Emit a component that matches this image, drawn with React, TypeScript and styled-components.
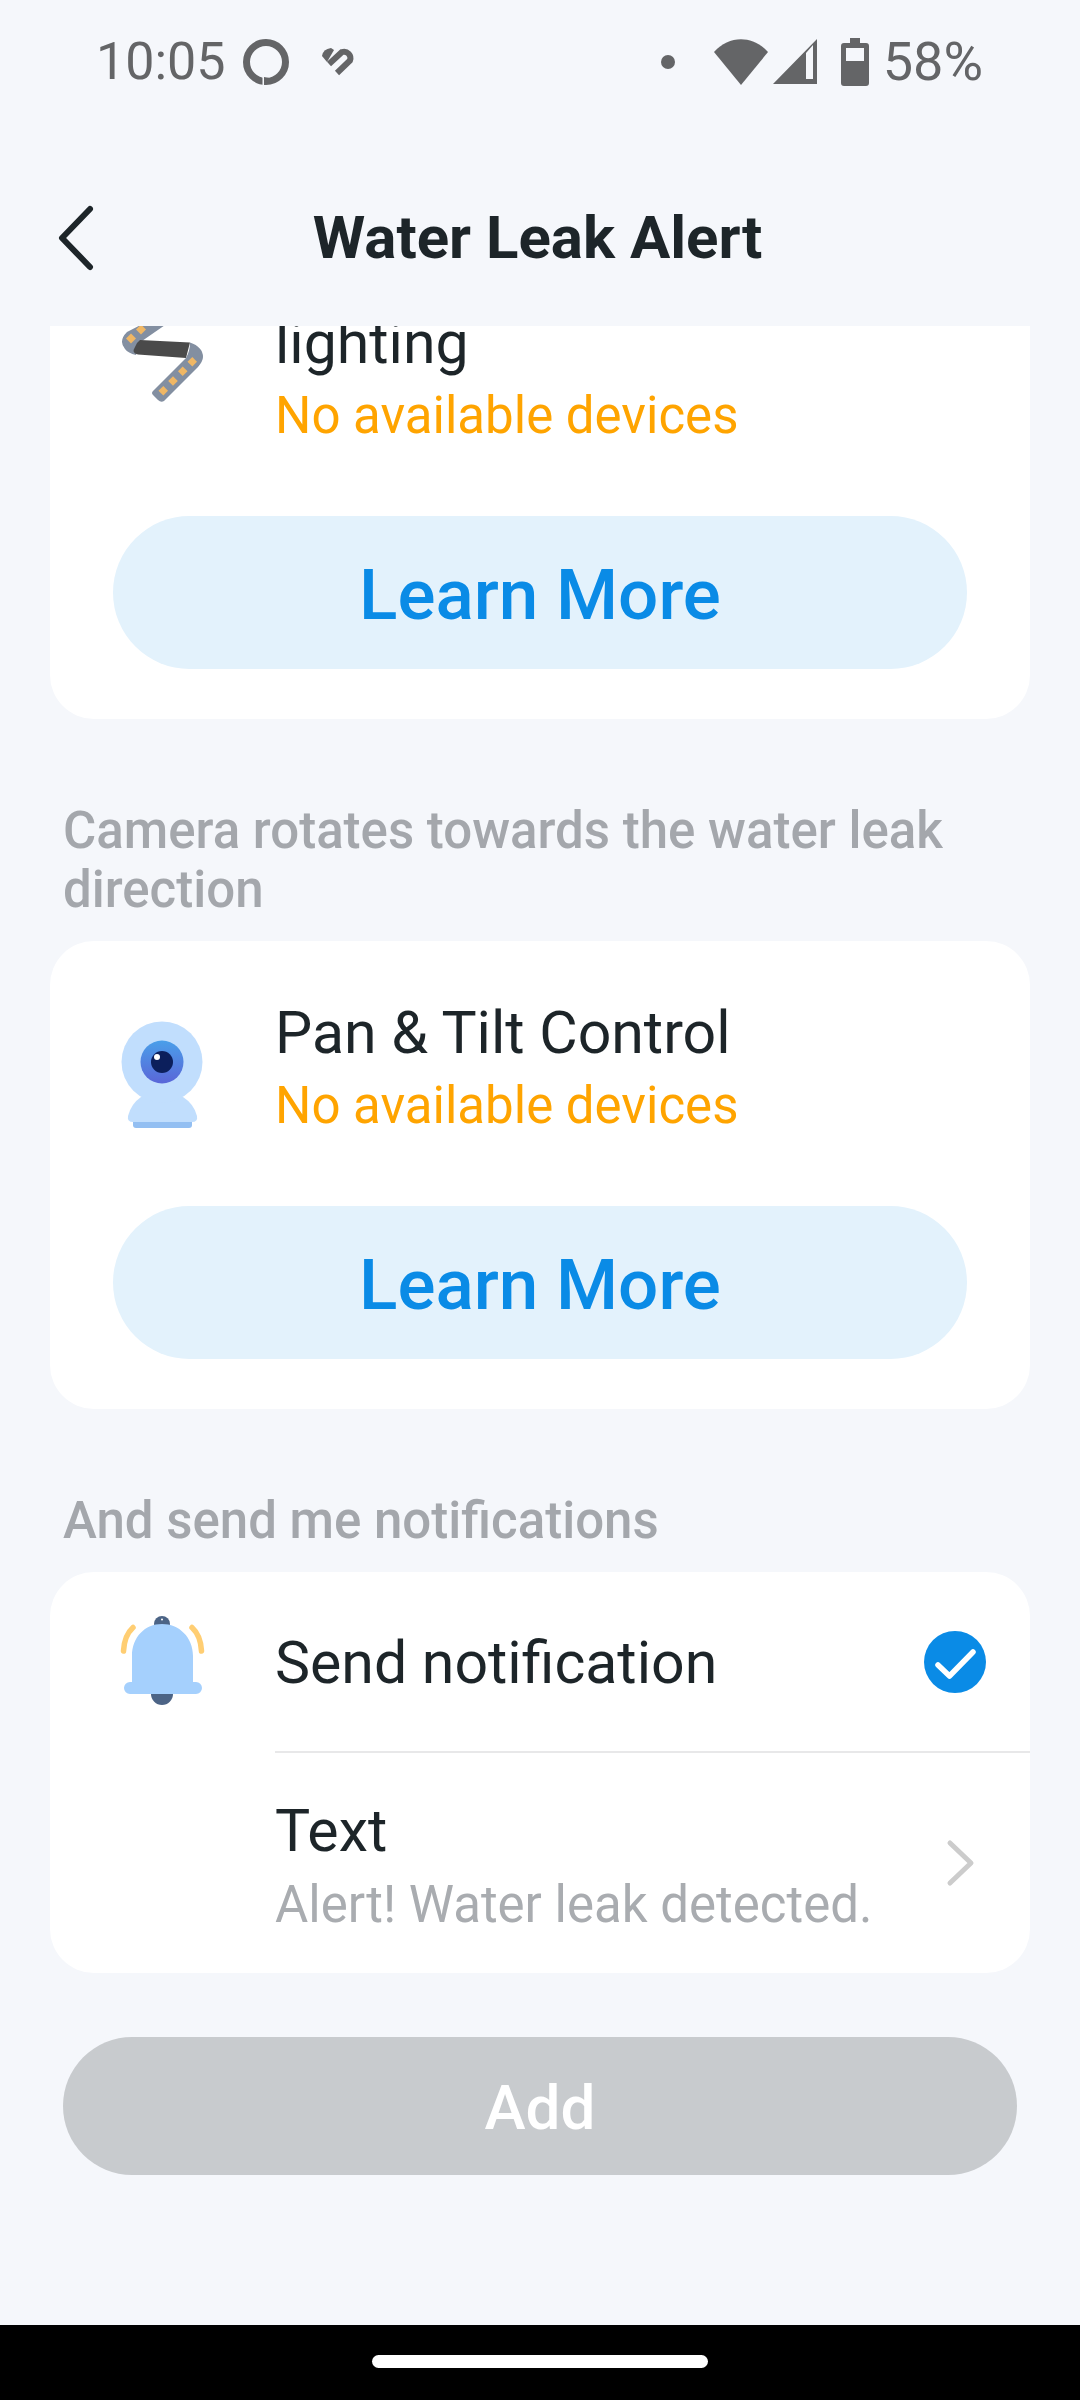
import React from 'react';
import styled, { createGlobalStyle } from 'styled-components';

const GlobalStyle = createGlobalStyle`
  html, body {
    margin: 0;
    padding: 0;
    background: #f5f7fb;
    font-family: Roboto, "Liberation Sans", sans-serif;
  }
`;

const Screen = styled.div`
  width: 1080px;
  height: 2400px;
  display: flex;
  flex-direction: column;
  background: #f5f7fb;
  overflow: hidden;
`;

// ---- status bar ----

const StatusBar = styled.div`
  height: 122px;
  flex: none;
  display: flex;
  justify-content: space-between;
  align-items: flex-start;
  padding: 37px 97px 0 96px;
  box-sizing: border-box;
  color: #646567;
`;

const StatusGroup = styled.div`
  display: flex;
  align-items: center;
  height: 50px;
`;

const StatusText = styled.span<{ $left?: number; $size?: number }>`
  font-size: ${(p) => p.$size ?? 52}px;
  line-height: 50px;
  margin-left: ${(p) => p.$left ?? 0}px;
`;

const StatusIcon = styled.svg<{ $left: number }>`
  display: block;
  flex: none;
  margin-left: ${(p) => p.$left}px;
  fill: #646567;
`;

// ---- header ----

const Header = styled.header`
  height: 204px;
  flex: none;
  position: relative;
  display: flex;
  justify-content: center;
  padding: 78px 5px 0 0;
  box-sizing: border-box;
`;

const Title = styled.h1`
  margin: 0;
  font-size: 60px;
  line-height: 76px;
  height: 76px;
  font-weight: 700;
  color: #1d2529;
`;

const BackIcon = styled.svg`
  position: absolute;
  left: 50px;
  top: 68px;
`;

// ---- scrolled content ----

const Scroller = styled.main`
  flex: 1;
  overflow: hidden;
  padding: 0 50px;
`;

const ScrollInner = styled.div`
  margin-top: -75px;
  display: flex;
  flex-direction: column;
`;

const SectionLabel = styled.div`
  margin: 82px 0 22px;
  padding-left: 13px;
  font-size: 51px;
  line-height: 59px;
  font-weight: 500;
  color: #a4a7ac;
`;

const Card = styled.section`
  background: #fff;
  border-radius: 44px;
  overflow: hidden;
`;

const DeviceCard = styled(Card)`
  padding: 59px 63px 50px;
`;

const DeviceRow = styled.div`
  display: flex;
  margin-left: -23px;
`;

const DeviceIcon = styled.svg`
  display: block;
  flex: none;
  width: 160px;
  height: 160px;
  margin: -9px 25px -60px 0;
`;

const DeviceText = styled.div`
  min-width: 0;
`;

const ItemTitle = styled.div`
  font-size: 59px;
  line-height: 66px;
  color: #1d2529;
`;

const Warning = styled.div`
  margin-top: 7px;
  font-size: 51px;
  line-height: 66px;
  color: #ffa400;
`;

const LearnMore = styled.button`
  display: block;
  width: 100%;
  height: 153px;
  margin-top: 67px;
  padding: 3px 0 0;
  border: 0;
  border-radius: 77px;
  background: #e3f2fc;
  color: #0a8be6;
  font-family: inherit;
  font-size: 71px;
  font-weight: 500;
`;

const NotifyRow = styled.div`
  height: 179px;
  display: flex;
  align-items: center;
  padding-left: 40px;
  padding-right: 44px;
`;

const BellIcon = styled.svg`
  display: block;
  flex: none;
  margin-right: 25px;
  margin-top: -11px;
`;

const Grow = styled.div`
  flex: 1;
  min-width: 0;
`;

const NotifyLabel = styled(Grow)`
  padding-top: 3px;
`;

const CheckIcon = styled.svg`
  display: block;
  flex: none;
`;

const Divider = styled.div`
  height: 2px;
  margin-left: 225px;
  background: #e8e8e9;
`;

const TextRow = styled.div`
  height: 220px;
  display: flex;
  align-items: flex-start;
  padding-left: 225px;
  padding-right: 54px;
  padding-top: 45px;
  box-sizing: border-box;
`;

const Hint = styled.div`
  margin-top: 8px;
  font-size: 51px;
  line-height: 66px;
  color: #a9acb0;
`;

const ChevronIcon = styled.svg`
  display: block;
  flex: none;
  margin-top: 41px;
`;

const AddButton = styled.button`
  display: block;
  width: 954px;
  height: 138px;
  margin: 64px 0 0 13px;
  padding: 3px 0 0;
  border: 0;
  border-radius: 69px;
  background: #c8cbce;
  color: #fff;
  font-family: inherit;
  font-size: 62px;
  font-weight: 500;
`;

// ---- navigation bar ----

const NavBar = styled.div`
  height: 75px;
  flex: none;
  background: #000;
  display: flex;
  justify-content: center;
  padding-top: 30px;
  box-sizing: border-box;
`;

const NavPill = styled.div`
  width: 336px;
  height: 13px;
  border-radius: 7px;
  background: #fff;
`;

// ---- drawings ----

const AlexaGlyph = () => (
  <StatusIcon $left={17} width="46" height="46" viewBox="0 0 46 46">
    <circle cx="23" cy="23" r="19.500" fill="none" stroke="#646567" strokeWidth="7" />
    <path d="M21 46 L21 38 L32 40 Z" />
    <rect x="19.500" y="38" width="1.500" height="8" fill="#f5f7fb" />
  </StatusIcon>
);

const HeartGlyph = () => (
  <StatusIcon $left={33} width="34" height="30" viewBox="0 0 34 30">
    <path d="M0 9 Q1 2 9 1 L12 3 L5 15 Z" />
    <path
      d="M7 17 L20 5 A6.500 6.500 0 0 1 28 13.500 L15 26"
      fill="none"
      stroke="#646567"
      strokeWidth="6"
    />
  </StatusIcon>
);

const DotGlyph = () => (
  <StatusIcon $left={0} width="14" height="14" viewBox="0 0 14 14">
    <circle cx="7" cy="7" r="7" />
  </StatusIcon>
);

const WifiGlyph = () => (
  <StatusIcon $left={39} width="54" height="46" viewBox="0 0 54 46">
    <path d="M0 13 C15 -4 39 -4 54 13 L27 46 Z" />
  </StatusIcon>
);

const SignalGlyph = () => (
  <StatusIcon $left={5} width="44" height="46" viewBox="0 0 44 46">
    <path fillRule="evenodd" d="M44 0 V45 H0 Z M33 14 L33 40 H40 V6 Z" />
  </StatusIcon>
);

const BatteryGlyph = () => (
  <StatusIcon $left={24} width="28" height="48" viewBox="0 0 28 48">
    <path
      fillRule="evenodd"
      d="M9 0 H19 V5 H25 Q28 5 28 8 V45 Q28 48 25 48 H3 Q0 48 0 45 V8 Q0 5 3 5 H9 Z M5 10 V23 H23 V10 Z"
    />
  </StatusIcon>
);

const StripIcon = () => (
  <DeviceIcon viewBox="0 0 160 160">
    <path d="M70 14 L37 31 Q28 40 35 48 Q38 52 46 54 L52 40 L78 22 Z" fill="#838fa1" />
    <path d="M50 39 L100 41.500 L96 57 L48 53.500 Q41 52 45 46 Q47 41 50 39 Z" fill="#4a4a4a" />
    <path
      d="M100 41.500 Q113 46 113 56 Q113 60 108 66 L74 100 Q71 102 68 99 L63 94 Q61 92 63 90 L96 57 Q100 50 100 41.500 Z"
      fill="#838fa1"
    />
    <g fill="#f0b764">
      <path d="M41 32.500 L46 37.500 L41 42.500 L36 37.500 Z" />
      <path d="M51 23.500 L56 28.500 L51 33.500 L46 28.500 Z" />
      <path d="M102.300 56 L107 60.700 L102.300 65.500 L97.500 60.700 Z" />
      <path d="M92.700 65.500 L97.500 70.300 L92.700 75 L88 70.300 Z" />
      <path d="M83 75.200 L87.800 80 L83 84.800 L78.200 80 Z" />
      <path d="M73.300 85 L78 89.700 L73.300 94.500 L68.500 89.700 Z" />
    </g>
  </DeviceIcon>
);

const CameraIcon = () => (
  <DeviceIcon viewBox="0 0 160 160">
    <defs>
      <linearGradient id="lens" x1="0" y1="0" x2="0" y2="1">
        <stop offset="0" stopColor="#4a9fe9" />
        <stop offset="1" stopColor="#5a66d8" />
      </linearGradient>
    </defs>
    <path d="M43 131 H102 V134 Q102 137 99 137 H46 Q43 137 43 134 Z" fill="#93bff2" />
    <path
      d="M51 106 Q41 113 38 125 Q37 131 43 131 H102 Q108 131 107 125 Q104 113 93 106 Z"
      fill="#c1defd"
    />
    <circle cx="72" cy="71" r="40.500" fill="#c1defd" />
    <circle cx="72" cy="71" r="21.500" fill="url(#lens)" />
    <circle cx="72" cy="71" r="11" fill="#0c1f5c" />
    <circle cx="67" cy="66" r="3" fill="#fff" />
  </DeviceIcon>
);

const BellGlyph = () => (
  <BellIcon width="160" height="130" viewBox="0 0 160 130">
    <circle cx="72" cy="33" r="8" fill="#4c6486" />
    <circle cx="72" cy="28.500" r="1" fill="#fff" />
    <path d="M61 103 a11 11 0 0 0 22 0 Z" fill="#4c6486" />
    <path
      d="M42 91 V65 C42 46 55 33 72 33 C89 33 103 46 103 65 V91 H106 A6 6 0 0 1 106 103 H40 A6 6 0 0 1 40 91 Z"
      fill="#a5d0fd"
    />
    <path d="M33.500 60 C34 50 37 42 43 36.500" stroke="#ffce73" strokeWidth="5.500" strokeLinecap="round" fill="none" />
    <path d="M111.500 60 C111 50 108 42 102 36.500" stroke="#ffce73" strokeWidth="5.500" strokeLinecap="round" fill="none" />
  </BellIcon>
);

const CheckBadge = () => (
  <CheckIcon width="62" height="62" viewBox="0 0 62 62">
    <circle cx="31" cy="31" r="31" fill="#0a8be6" />
    <path d="M14 34 L25.500 45 L49 21" stroke="#fff" strokeWidth="5.500" strokeLinecap="round" strokeLinejoin="round" fill="none" />
  </CheckIcon>
);

const App: React.FC = () => (
  <Screen>
    <GlobalStyle />
    <StatusBar>
      <StatusGroup>
        <StatusText>10:05</StatusText>
        <AlexaGlyph />
        <HeartGlyph />
      </StatusGroup>
      <StatusGroup>
        <DotGlyph />
        <WifiGlyph />
        <SignalGlyph />
        <BatteryGlyph />
        <StatusText $left={14} $size={54}>58%</StatusText>
      </StatusGroup>
    </StatusBar>

    <Header>
      <BackIcon width="50" height="90" viewBox="0 0 50 90">
        <path d="M40 19 L12 48 L40 77" stroke="#1d2529" strokeWidth="6" strokeLinecap="round" strokeLinejoin="round" fill="none" />
      </BackIcon>
      <Title>Water Leak Alert</Title>
    </Header>

    <Scroller>
      <ScrollInner>
        <DeviceCard>
          <DeviceRow>
            <StripIcon />
            <DeviceText>
              <ItemTitle>lighting</ItemTitle>
              <Warning>No available devices</Warning>
            </DeviceText>
          </DeviceRow>
          <LearnMore>Learn More</LearnMore>
        </DeviceCard>

        <SectionLabel>Camera rotates towards the water leak direction</SectionLabel>
        <DeviceCard>
          <DeviceRow>
            <CameraIcon />
            <DeviceText>
              <ItemTitle>Pan &amp; Tilt Control</ItemTitle>
              <Warning>No available devices</Warning>
            </DeviceText>
          </DeviceRow>
          <LearnMore>Learn More</LearnMore>
        </DeviceCard>

        <SectionLabel>And send me notifications</SectionLabel>
        <Card>
          <NotifyRow>
            <BellGlyph />
            <NotifyLabel>
              <ItemTitle>Send notification</ItemTitle>
            </NotifyLabel>
            <CheckBadge />
          </NotifyRow>
          <Divider />
          <TextRow>
            <Grow>
              <ItemTitle>Text</ItemTitle>
              <Hint>Alert! Water leak detected.</Hint>
            </Grow>
            <ChevronIcon width="30" height="48" viewBox="0 0 30 48">
              <path d="M4 4 L25 24 L4 44" stroke="#ccc" strokeWidth="5" strokeLinecap="round" strokeLinejoin="round" fill="none" />
            </ChevronIcon>
          </TextRow>
        </Card>

        <AddButton>Add</AddButton>
      </ScrollInner>
    </Scroller>

    <NavBar>
      <NavPill />
    </NavBar>
  </Screen>
);

export default App;
